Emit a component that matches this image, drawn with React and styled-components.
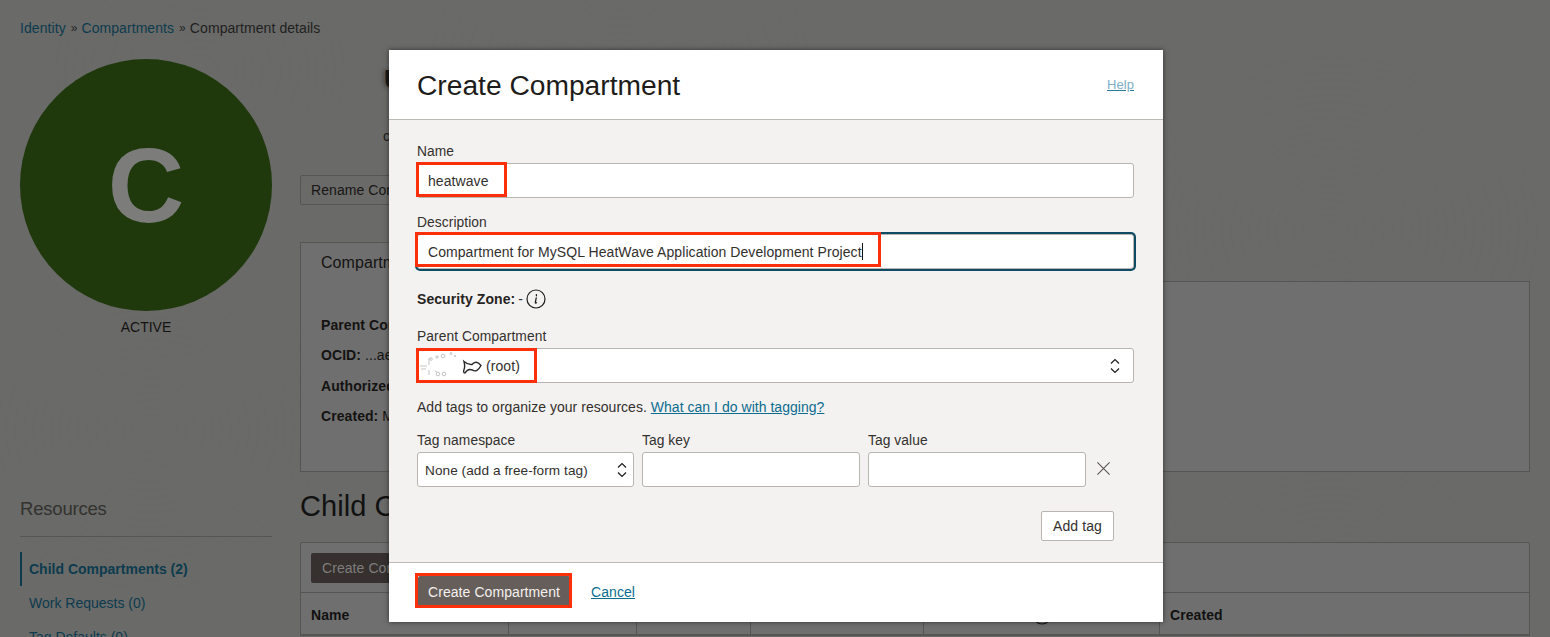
import React from "react"
import styled, { createGlobalStyle } from "styled-components"

const GlobalStyle = createGlobalStyle`
    html, body{
        margin: 0;
        padding: 0;
        background: #6a6a68;
    }
    body{
        font-family: "Liberation Sans", Arial, sans-serif;
        font-size: 14px;
        letter-spacing: 0.07px;
        color: #1c1a18;
    }
    *{
        box-sizing: border-box;
    }
`

const rings = [
    [620, 70, 190], [1330, 230, 210], [1000, 510, 150], [150, 430, 190],
    [620, 470, 170], [1330, 600, 200], [200, 70, 150],
]

function Texture(){
    return (
        <TextureSvg width="1550" height="637" viewBox="0 0 1550 637">
            {rings.map(([cx, cy, max]) =>
                Array.from({ length: Math.floor(max / 9) }, (_, i) => (
                    <ellipse key={`${cx}-${i}`} cx={cx} cy={cy} rx={(i + 1) * 9} ry={(i + 1) * 7.5} />
                ))
            )}
        </TextureSvg>
    )
}

function Chevrons(){
    return (
        <svg width="10" height="16" viewBox="0 0 10 16" fill="none" stroke="#1f1d1b" strokeWidth="1.2">
            <path d="M1 5.5 L5 1.5 L9 5.5" />
            <path d="M1 10.5 L5 14.5 L9 10.5" />
        </svg>
    )
}

function InfoIcon({ color = "#1f1d1b" }){
    return (
        <svg width="20" height="20" viewBox="0 0 20 20" fill="none">
            <circle cx="10" cy="10" r="9" stroke={color} strokeWidth="1.2" />
            <path d="M10.4 5.6 L10.4 6.8 M10.2 9 L9.3 13.6 Q9.2 14.6 10.6 13.8" stroke={color} strokeWidth="1.3" strokeLinecap="round" />
        </svg>
    )
}

function TenancyLogo(){
    return (
        <svg width="66" height="30" viewBox="0 0 66 30" fill="none">
            <g stroke="#a9a5a1" strokeWidth="0.8" opacity="0.8">
                <circle cx="13" cy="8" r="1.3" />
                <circle cx="19" cy="6" r="1.2" />
                <circle cx="25" cy="5" r="1.8" />
                <circle cx="33" cy="2.5" r="1" />
                <circle cx="37" cy="5" r="0.7" />
                <circle cx="20" cy="23" r="1.8" />
                <circle cx="26" cy="23" r="1.8" />
                <path d="M2 15 L9 15 M3 18 L8 18 M11 7 L11 14 M11 19 L11 24 M17 20 L19 21" />
            </g>
            <path d="M46 10.5 Q50 14 54 13.5 Q58 8.5 63 14.5 Q59 22 54.5 19 Q50 17 47 22 Q44.5 22 46.5 17 Q47 14 46 10.5 Z" stroke="#2b2927" strokeWidth="1.4" />
        </svg>
    )
}

export default function App(){
    return (
        <Page>
            <GlobalStyle />
            <Texture />

            <Breadcrumb>
                <CrumbLink>Identity</CrumbLink>
                <CrumbSep>»</CrumbSep>
                <CrumbLink>Compartments</CrumbLink>
                <CrumbSep>»</CrumbSep>
                <span>Compartment details</span>
            </Breadcrumb>

            <Columns>
                <Sidebar>
                    <Avatar>C</Avatar>
                    <Status>ACTIVE</Status>
                    <ResourcesTitle>Resources</ResourcesTitle>
                    <SideNav>
                        <SideItem $active>Child Compartments (2)</SideItem>
                        <SideItem>Work Requests (0)</SideItem>
                        <SideItem>Tag Defaults (0)</SideItem>
                    </SideNav>
                </Sidebar>

                <Main>
                    <HiddenTitle>U</HiddenTitle>
                    <HiddenSub>c</HiddenSub>
                    <OutlineButton>Rename Compartment</OutlineButton>

                    <Tab>Compartment Information</Tab>
                    <InfoPanel>
                        <InfoLine><b>Parent Compartment:</b></InfoLine>
                        <InfoLine><b>OCID:</b> ...ae</InfoLine>
                        <InfoLine><b>Authorized:</b></InfoLine>
                        <InfoLine><b>Created:</b> Mon</InfoLine>
                    </InfoPanel>

                    <ChildTitle>Child Compartments</ChildTitle>
                    <TableCard>
                        <TableToolbar>
                            <DarkButton>Create Compartment</DarkButton>
                        </TableToolbar>
                        <TableHead>
                            <HeadCell>Name</HeadCell>
                            <HeadCell />
                            <HeadCell />
                            <HeadCell />
                            <HeadCell $center><InfoIcon color="#1c1a18" /></HeadCell>
                            <HeadCell>Created</HeadCell>
                        </TableHead>
                    </TableCard>
                </Main>
            </Columns>

            <Modal>
                <ModalHeader>
                    <ModalTitle>Create Compartment</ModalTitle>
                    <HelpLink>Help</HelpLink>
                </ModalHeader>

                <ModalBody>
                    <Label>Name</Label>
                    <Input>
                        heatwave
                        <Highlight $top={-2} $left={-2} $width={91} />
                    </Input>

                    <Label $gap={17}>Description</Label>
                    <Input $focused>
                        Compartment for MySQL HeatWave Application Development Project
                        <Caret />
                        <Highlight $top={-3} $left={-3} $width={466} />
                    </Input>

                    <SecurityLine>
                        <b>Security Zone:</b> -
                        <InfoIcon />
                    </SecurityLine>

                    <Label $gap={20}>Parent Compartment</Label>
                    <SelectBox $logo>
                        <SelectValue>
                            <TenancyLogo />
                            (root)
                        </SelectValue>
                        <Chevrons />
                        <Highlight $top={-1} $left={-2} $width={121} />
                    </SelectBox>

                    <TagsHint>
                        Add tags to organize your resources. <BodyLink>What can I do with tagging?</BodyLink>
                    </TagsHint>

                    <TagRow>
                        <TagField>
                            <Label>Tag namespace</Label>
                            <SelectBox>
                                None (add a free-form tag)
                                <Chevrons />
                            </SelectBox>
                        </TagField>
                        <TagField>
                            <Label>Tag key</Label>
                            <Input />
                        </TagField>
                        <TagField>
                            <Label>Tag value</Label>
                            <Input />
                        </TagField>
                        <RemoveTag>
                            <svg width="15" height="15" viewBox="0 0 16 16" stroke="#55524f" strokeWidth="1.1">
                                <path d="M1.5 1.5 L14.5 14.5 M14.5 1.5 L1.5 14.5" />
                            </svg>
                        </RemoveTag>
                    </TagRow>

                    <AddTagRow>
                        <AddTagButton>Add tag</AddTagButton>
                    </AddTagRow>
                </ModalBody>

                <ModalFooter>
                    <PrimaryButton>
                        Create Compartment
                        <Highlight $top={-3} $left={-3} $width={157} />
                    </PrimaryButton>
                    <BodyLink>Cancel</BodyLink>
                </ModalFooter>
            </Modal>
        </Page>
    )
}

const Page = styled.div`
    position: relative;
    width: 1550px;
    height: 637px;
    overflow: hidden;
    padding: 19px 20px 0;
    background: #6a6a68;
`

const TextureSvg = styled.svg`
    position: absolute;
    top: 0;
    left: 0;
    fill: none;
    stroke: #5f5f5c;
    stroke-width: 0.6;
    opacity: 0.16;
`

const Breadcrumb = styled.div`
    position: relative;
    display: flex;
    align-items: center;
    height: 18px;
    letter-spacing: 0.07px;
    color: #1f1f1e;
`

const CrumbLink = styled.span`
    color: #0d3b4e;
`

const CrumbSep = styled.span`
    margin: 0 4px 0 5px;
    font-size: 12px;
    color: #262626;
`

const Columns = styled.div`
    position: relative;
    display: flex;
    gap: 28px;
    margin-top: 22px;
`

const Sidebar = styled.aside`
    width: 252px;
    flex-shrink: 0;
`

const Avatar = styled.div`
    display: flex;
    align-items: center;
    justify-content: center;
    width: 252px;
    height: 252px;
    border-radius: 50%;
    background: #1f390d;
    color: #7c7c7b;
    font-size: 106px;
    font-weight: bold;
`

const Status = styled.div`
    margin-top: 8px;
    height: 16px;
    line-height: 16px;
    text-align: center;
    letter-spacing: 0;
    color: #141312;
`

const ResourcesTitle = styled.div`
    margin-top: 159px;
    height: 30px;
    padding-bottom: 12px;
    border-bottom: 1px solid #565553;
    box-sizing: content-box;
    line-height: 30px;
    font-size: 18.5px;
    color: #33322f;
    letter-spacing: -0.2px;
`

const SideNav = styled.nav`
    margin-top: 15px;
    display: flex;
    flex-direction: column;
    gap: 0;
    letter-spacing: 0;
`

const SideItem = styled.div`
    display: flex;
    align-items: center;
    height: 34px;
    padding-left: ${(props) => props.$active ? "7px" : "9px"};
    border-left: ${(props) => props.$active ? "2px solid #0d3b4e" : "none"};
    color: #0d3b4e;
    font-weight: ${(props) => props.$active ? "bold" : "normal"};
`

const Main = styled.main`
    width: 1230px;
    flex-shrink: 0;
`

const HiddenTitle = styled.div`
    height: 40px;
    padding-left: 84px;
    line-height: 40px;
    font-size: 26px;
    font-weight: bold;
    color: #1a1918;
    text-shadow: -2px 0 4px rgba(30, 30, 30, 0.5);
`

const HiddenSub = styled.div`
    margin-top: 27px;
    height: 20px;
    padding-left: 83px;
    line-height: 20px;
    color: #1a1918;
`

const OutlineButton = styled.div`
    display: flex;
    align-items: center;
    margin-top: 29px;
    width: 200px;
    height: 30px;
    padding-left: 10px;
    border: 1px solid #565553;
    border-radius: 2px;
    color: #171615;
`

const Tab = styled.div`
    position: relative;
    z-index: 1;
    width: 300px;
    height: 40px;
    margin-top: 37px;
    padding: 11px 0 0 20px;
    border: 1px solid #565553;
    border-bottom: none;
    background: #6f6f6f;
    font-size: 16px;
    color: #141312;
`

const InfoPanel = styled.section`
    height: 191px;
    margin-top: -1px;
    padding-top: 33px;
    padding-left: 20px;
    border: 1px solid #565553;
    background: #6f6f6f;
`

const InfoLine = styled.div`
    height: 30.4px;
    line-height: 20px;
    color: #141312;
`

const ChildTitle = styled.h2`
    margin: 16px 0 0;
    height: 36px;
    line-height: 36px;
    font-size: 29px;
    font-weight: normal;
    color: #111;
`

const TableCard = styled.section`
    margin-top: 18px;
    border: 1px solid #565553;
    border-radius: 2px 2px 0 0;
    background: #6f6f6f;
`

const TableToolbar = styled.div`
    display: flex;
    align-items: center;
    height: 50px;
    padding: 0 10px;
    border-bottom: 1px solid #565553;
`

const DarkButton = styled.div`
    display: flex;
    align-items: center;
    width: 200px;
    height: 30px;
    padding-left: 11px;
    border-radius: 2px;
    background: #36312e;
    color: #7f7d7b;
`

const TableHead = styled.div`
    display: grid;
    grid-template-columns: 207px 128px 114px 173px 236px 1fr;
    height: 42px;
    border-bottom: 1px solid #565553;
`

const HeadCell = styled.div`
    display: flex;
    align-items: center;
    justify-content: ${(props) => props.$center ? "center" : "flex-start"};
    padding: 2px 10px 0;
    border-left: 1px solid #565553;
    font-weight: bold;
    color: #111;
    &:first-child{
        border-left: none;
    }
`

const Modal = styled.div`
    position: absolute;
    top: 50px;
    left: 389px;
    width: 774px;
    height: 572px;
    display: flex;
    flex-direction: column;
    background: #fff;
    box-shadow: 0 0 5px rgba(0, 0, 0, 0.55);
    z-index: 2;
`

const ModalHeader = styled.header`
    display: flex;
    align-items: center;
    justify-content: space-between;
    height: 70px;
    padding: 0 29px 0 28px;
    border-bottom: 1px solid #bcb9b5;
    flex-shrink: 0;
`

const ModalTitle = styled.h1`
    margin: 1px 0 0;
    font-size: 28.2px;
    font-weight: normal;
    letter-spacing: 0;
    color: #1e1c1a;
`

const HelpLink = styled.a`
    color: #7db0c6;
    font-size: 13px;
    text-decoration: underline;
    text-decoration-color: #2c7b9c;
`

const ModalBody = styled.div`
    flex: 1;
    padding: 24px 29px 0 28px;
    background: #f3f2f1;
`

const Label = styled.div`
    height: 16px;
    margin-top: ${(props) => props.$gap || 0}px;
    margin-bottom: 3px;
    line-height: 16px;
    font-size: 13.8px;
    color: #33302d;
`

const Input = styled.div`
    position: relative;
    display: flex;
    align-items: center;
    height: 35px;
    padding-left: 10px;
    border: 1px solid #b8b4af;
    border-radius: 3px;
    background: #fff;
    color: #33302d;
    white-space: nowrap;
    box-shadow: ${(props) => props.$focused ? "0 0 0 2px #0f4b63" : "none"};
`

const Caret = styled.span`
    width: 1px;
    height: 17px;
    background: #111;
`

const Highlight = styled.span`
    position: absolute;
    top: ${(props) => props.$top}px;
    left: ${(props) => props.$left}px;
    width: ${(props) => props.$width}px;
    height: 35px;
    border: 3px solid #fb2f0a;
    pointer-events: none;
`

const SecurityLine = styled.div`
    display: flex;
    align-items: center;
    gap: 3px;
    height: 20px;
    margin-top: 20px;
    font-size: 14px;
    color: #33302d;
    b{
        color: #262422;
    }
`

const SelectBox = styled.div`
    position: relative;
    display: flex;
    align-items: center;
    justify-content: space-between;
    height: 35px;
    padding: ${(props) => props.$logo ? "0 13px 0 0" : "1px 6px 0 7px"};
    border: 1px solid #b8b4af;
    border-radius: 3px;
    background: #fff;
    color: #33302d;
    font-size: ${(props) => props.$logo ? "14px" : "13.6px"};
    white-space: nowrap;
    svg{
        flex-shrink: 0;
    }
`

const SelectValue = styled.span`
    display: flex;
    align-items: center;
    gap: 2px;
`

const TagsHint = styled.div`
    height: 20px;
    margin-top: 14px;
    line-height: 20px;
    font-size: 14px;
    letter-spacing: 0.03px;
    color: #33302d;
`

const BodyLink = styled.a`
    color: #0d6c8f;
    text-decoration: underline;
`

const TagRow = styled.div`
    display: grid;
    grid-template-columns: 217px 218px 218px 48px;
    gap: 8px;
    margin-top: 16px;
`

const TagField = styled.div`
    min-width: 0;
`

const RemoveTag = styled.div`
    display: flex;
    align-items: flex-start;
    padding: 28px 0 0 2px;
`

const AddTagRow = styled.div`
    display: flex;
    justify-content: flex-end;
    margin-top: 24px;
    padding-right: 20px;
`

const AddTagButton = styled.div`
    display: flex;
    align-items: center;
    justify-content: center;
    width: 73px;
    height: 30px;
    border: 1px solid #b8b4af;
    border-radius: 2px;
    background: #fff;
    color: #33302d;
`

const ModalFooter = styled.footer`
    display: flex;
    align-items: center;
    gap: 21px;
    height: 60px;
    padding: 0 0 2px 29px;
    border-top: 1px solid #bcb9b5;
    flex-shrink: 0;
`

const PrimaryButton = styled.div`
    position: relative;
    display: flex;
    align-items: center;
    justify-content: center;
    width: 152px;
    height: 31px;
    border-radius: 2px;
    background: #665e5a;
    color: #f3f1ef;
`
